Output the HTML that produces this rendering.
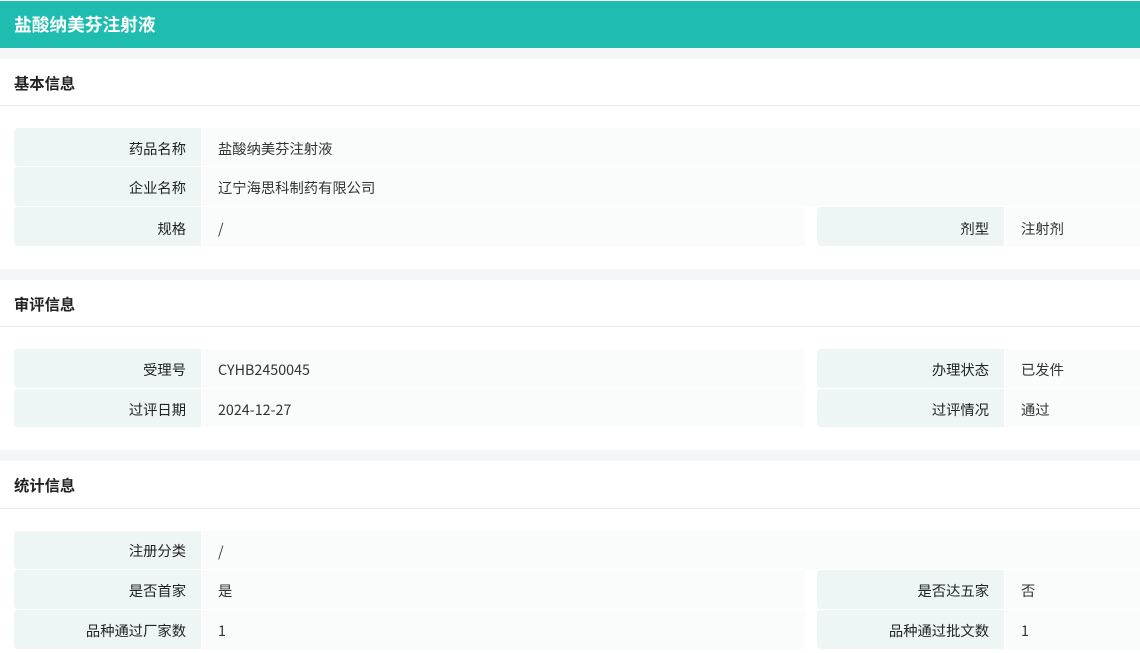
<!DOCTYPE html>
<html lang="zh-CN"><head><meta charset="utf-8"><style>
html,body{margin:0;padding:0;background:#fff;overflow:hidden}
body{position:relative;width:1140px;height:653px;font-family:"Noto Sans CJK SC",sans-serif;font-size:14.3px;color:#333}
div{position:absolute;box-sizing:border-box;white-space:nowrap}
.g{left:0;width:1140px;height:11px;background:#f5f6f8}
.t{left:14px;font-size:15.3px;font-weight:700;color:#222;line-height:24px;height:24px}
.ln{left:0;width:1140px;height:1px;background:#eaeaea}
.l{background:#edf5f5;text-align:right;padding-right:15px;color:#222;border-radius:4px 0 0 4px}
.v{background:#fafcfc;padding-left:16px;color:#333}
.a{left:14px;width:187px}.b{left:202px;width:603px}.c{left:817px;width:187px}.d{left:1005px;width:135px}.w{left:202px;width:938px}
</style></head><body>
<div style="left:0;top:1px;width:1140px;height:47px;background:#1fbdb0;color:#fff;font-size:17.7px;font-weight:700;line-height:47px;padding-left:14px">盐酸纳美芬注射液</div>
<div class="g" style="top:48px"></div>
<div class="t" style="top:71px">基本信息</div><div class="ln" style="top:105px"></div>
<div class="l a" style="top:128px;height:38px;line-height:41px">药品名称</div><div class="v w" style="top:128px;height:38px;line-height:41px">盐酸纳美芬注射液</div>
<div class="l a" style="top:167px;height:39px;line-height:41px">企业名称</div><div class="v w" style="top:167px;height:39px;line-height:41px">辽宁海思科制药有限公司</div>
<div class="l a" style="top:207px;height:39px;line-height:43px">规格</div><div class="v b" style="top:207px;height:39px;line-height:43px">/</div>
<div class="l c" style="top:207px;height:39px;line-height:43px">剂型</div><div class="v d" style="top:207px;height:39px;line-height:43px">注射剂</div>
<div class="g" style="top:269px"></div>
<div class="t" style="top:292px">审评信息</div><div class="ln" style="top:326px"></div>
<div class="l a" style="top:349px;height:39px;line-height:41px">受理号</div><div class="v b" style="top:349px;height:39px;line-height:41px">CYHB2450045</div>
<div class="l c" style="top:349px;height:39px;line-height:41px">办理状态</div><div class="v d" style="top:349px;height:39px;line-height:41px">已发件</div>
<div class="l a" style="top:389px;height:38px;line-height:41px">过评日期</div><div class="v b" style="top:389px;height:38px;line-height:41px">2024-12-27</div>
<div class="l c" style="top:389px;height:38px;line-height:41px">过评情况</div><div class="v d" style="top:389px;height:38px;line-height:41px">通过</div>
<div class="g" style="top:450px"></div>
<div class="t" style="top:473px">统计信息</div><div class="ln" style="top:508px"></div>
<div class="l a" style="top:531px;height:38px;line-height:39px">注册分类</div><div class="v w" style="top:531px;height:38px;line-height:41px">/</div>
<div class="l a" style="top:570px;height:39px;line-height:41px">是否首家</div><div class="v b" style="top:570px;height:39px;line-height:41px">是</div>
<div class="l c" style="top:570px;height:39px;line-height:41px">是否达五家</div><div class="v d" style="top:570px;height:39px;line-height:41px">否</div>
<div class="l a" style="top:610px;height:39px;line-height:41px">品种通过厂家数</div><div class="v b" style="top:610px;height:39px;line-height:41px">1</div>
<div class="l c" style="top:610px;height:39px;line-height:41px">品种通过批文数</div><div class="v d" style="top:610px;height:39px;line-height:41px">1</div>
</body></html>
